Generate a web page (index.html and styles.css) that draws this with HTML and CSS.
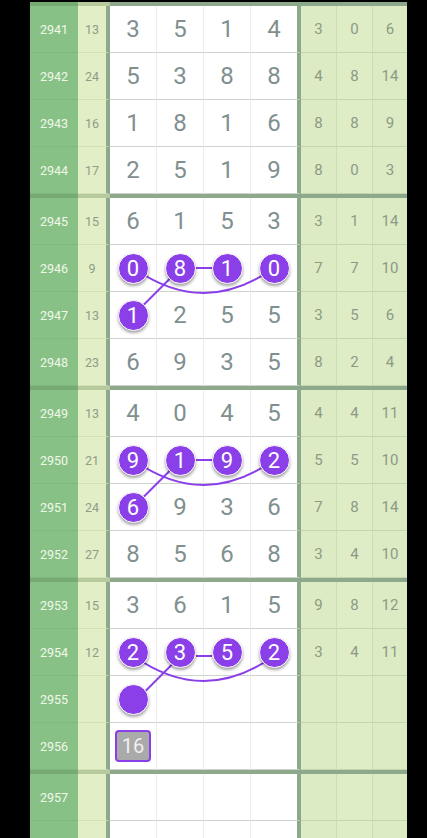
FILE: index.html
```html
<!DOCTYPE html>
<html lang="zh">
<head>
  <meta charset="UTF-8" />
  <meta name="viewport" content="width=device-width, initial-scale=1.0"/>
  <title>走势图</title>
  <link rel="stylesheet" href="styles.css">
</head>
<body>
  <div class="board">
    <div class="group">
      <div class="row"><span class="no">2941</span><span class="sum">13</span><span class="d">3</span><span class="d">5</span><span class="d">1</span><span class="d">4</span><span class="s">3</span><span class="s">0</span><span class="s">6</span></div>
      <div class="row"><span class="no">2942</span><span class="sum">24</span><span class="d">5</span><span class="d">3</span><span class="d">8</span><span class="d">8</span><span class="s">4</span><span class="s">8</span><span class="s">14</span></div>
      <div class="row"><span class="no">2943</span><span class="sum">16</span><span class="d">1</span><span class="d">8</span><span class="d">1</span><span class="d">6</span><span class="s">8</span><span class="s">8</span><span class="s">9</span></div>
      <div class="row"><span class="no">2944</span><span class="sum">17</span><span class="d">2</span><span class="d">5</span><span class="d">1</span><span class="d">9</span><span class="s">8</span><span class="s">0</span><span class="s">3</span></div>
    </div>
    <div class="group">
      <div class="row"><span class="no">2945</span><span class="sum">15</span><span class="d">6</span><span class="d">1</span><span class="d">5</span><span class="d">3</span><span class="s">3</span><span class="s">1</span><span class="s">14</span></div>
      <div class="row"><span class="no">2946</span><span class="sum">9</span><span class="d"><b class="ball">0</b></span><span class="d"><b class="ball">8</b></span><span class="d"><b class="ball">1</b></span><span class="d"><b class="ball">0</b></span><span class="s">7</span><span class="s">7</span><span class="s">10</span></div>
      <div class="row"><span class="no">2947</span><span class="sum">13</span><span class="d"><b class="ball">1</b></span><span class="d">2</span><span class="d">5</span><span class="d">5</span><span class="s">3</span><span class="s">5</span><span class="s">6</span></div>
      <div class="row"><span class="no">2948</span><span class="sum">23</span><span class="d">6</span><span class="d">9</span><span class="d">3</span><span class="d">5</span><span class="s">8</span><span class="s">2</span><span class="s">4</span></div>
    </div>
    <div class="group">
      <div class="row"><span class="no">2949</span><span class="sum">13</span><span class="d">4</span><span class="d">0</span><span class="d">4</span><span class="d">5</span><span class="s">4</span><span class="s">4</span><span class="s">11</span></div>
      <div class="row"><span class="no">2950</span><span class="sum">21</span><span class="d"><b class="ball">9</b></span><span class="d"><b class="ball">1</b></span><span class="d"><b class="ball">9</b></span><span class="d"><b class="ball">2</b></span><span class="s">5</span><span class="s">5</span><span class="s">10</span></div>
      <div class="row"><span class="no">2951</span><span class="sum">24</span><span class="d"><b class="ball">6</b></span><span class="d">9</span><span class="d">3</span><span class="d">6</span><span class="s">7</span><span class="s">8</span><span class="s">14</span></div>
      <div class="row"><span class="no">2952</span><span class="sum">27</span><span class="d">8</span><span class="d">5</span><span class="d">6</span><span class="d">8</span><span class="s">3</span><span class="s">4</span><span class="s">10</span></div>
    </div>
    <div class="group">
      <div class="row"><span class="no">2953</span><span class="sum">15</span><span class="d">3</span><span class="d">6</span><span class="d">1</span><span class="d">5</span><span class="s">9</span><span class="s">8</span><span class="s">12</span></div>
      <div class="row"><span class="no">2954</span><span class="sum">12</span><span class="d"><b class="ball">2</b></span><span class="d"><b class="ball">3</b></span><span class="d"><b class="ball">5</b></span><span class="d"><b class="ball">2</b></span><span class="s">3</span><span class="s">4</span><span class="s">11</span></div>
      <div class="row"><span class="no">2955</span><span class="sum"></span><span class="d"><b class="ball"></b></span><span class="d"></span><span class="d"></span><span class="d"></span><span class="s"></span><span class="s"></span><span class="s"></span></div>
      <div class="row"><span class="no">2956</span><span class="sum"></span><span class="d"><b class="tag">16</b></span><span class="d"></span><span class="d"></span><span class="d"></span><span class="s"></span><span class="s"></span><span class="s"></span></div>
    </div>
    <div class="group">
      <div class="row"><span class="no">2957</span><span class="sum"></span><span class="d"></span><span class="d"></span><span class="d"></span><span class="d"></span><span class="s"></span><span class="s"></span><span class="s"></span></div>
      <div class="row"><span class="no"></span><span class="sum"></span><span class="d"></span><span class="d"></span><span class="d"></span><span class="d"></span><span class="s"></span><span class="s"></span><span class="s"></span></div>
    </div>
  </div>

  <!-- connecting lines between repeated balls -->
  <svg class="links" width="427" height="838" viewBox="0 0 427 838">
    <g fill="none" stroke="#8a3fe8" stroke-width="2">
      <line x1="196" y1="268" x2="212" y2="268"/>
      <path d="M133.5 268 Q204 318 274 268"/>
      <line x1="180.5" y1="268" x2="133.5" y2="315"/>

      <line x1="196" y1="460" x2="212" y2="460"/>
      <path d="M133.5 460 Q204 510 274 460"/>
      <line x1="180.5" y1="460" x2="133.5" y2="507"/>

      <line x1="196" y1="656" x2="212" y2="656"/>
      <path d="M133.5 656 Q204 706 274 656"/>
      <line x1="180.5" y1="656" x2="133.5" y2="703"/>
    </g>
  </svg>
</body>
</html>
```

FILE: styles.css
```css
body {
  margin: 0;
  background: #000;
  position: relative;
  height: 838px;
  overflow: hidden;
  font-family: Roboto, "Noto Sans", sans-serif;
}
.board {
  width: 377px;
  margin: 2px 0 0 30px;
  background: #fff;
}
.group {
  position: relative;
  padding-top: 4px;
}
.group::before {
  content: "";
  position: absolute;
  left: 0;
  right: 0;
  top: 0;
  height: 4px;
  background: linear-gradient(to right, #76aa73 0 48px, #b7c99d 48px 80px, #8ea88c 80px);
}
.row {
  display: grid;
  grid-template-columns: 48px 32px 47px 47px 47px 50px 36px 36px 34px;
  height: 47px;
}
.row > span {
  box-sizing: border-box;
  display: flex;
  align-items: center;
  justify-content: center;
  border-bottom: 1px solid #cdd3cd;
}
.no {
  background: #88c185;
  color: #f1f8ea;
  font-size: 12.5px;
  border-bottom-color: #80b97d !important;
}
.sum {
  background: #e2eec6;
  color: #8f9c88;
  font-size: 12.5px;
  border-right: 4px solid #8ea88c;
  border-bottom-color: #d2e1b4 !important;
}
.d {
  color: #818f8f;
  font-size: 24px;
  border-right: 1px solid #ececec;
}
.d:nth-child(6) {
  border-right: 4px solid #8ea88c;
}
.s {
  background: #dcebc3;
  color: #8c9a86;
  font-size: 15px;
  border-right: 1px solid #cbdfb5;
  border-bottom-color: #c2d6ac !important;
}
.s:nth-child(8) {
  background: #dfedc7;
}
.s:last-child {
  border-right: none;
}
.ball {
  position: relative;
  z-index: 2;
  width: 29px;
  height: 29px;
  border-radius: 50%;
  background: #8a3fe8;
  color: #fff;
  font-size: 22px;
  font-weight: 400;
  display: flex;
  align-items: center;
  justify-content: center;
  border: 1.5px solid #fff;
  box-shadow: 0 2px 3px rgba(0,0,0,0.35);
}
.tag {
  width: 32px;
  height: 28px;
  border: 2px solid #8a3fe8;
  border-radius: 4px;
  background: #aaaaaa;
  color: #f0f0f0;
  font-size: 20px;
  font-weight: 400;
  display: flex;
  align-items: center;
  justify-content: center;
}
.links {
  position: absolute;
  left: 0;
  top: 0;
  z-index: 1;
  pointer-events: none;
}
```
